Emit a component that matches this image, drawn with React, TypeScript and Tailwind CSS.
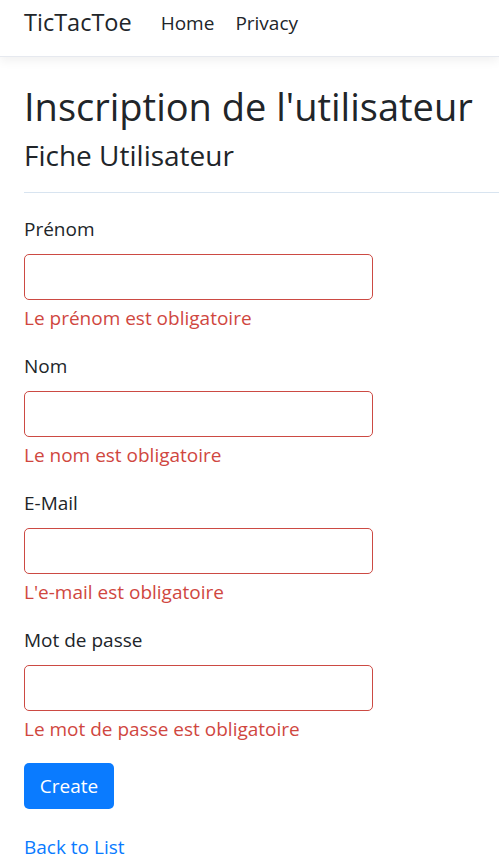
import React from "react";

const fields = [
  { label: "Prénom", type: "text", error: "Le prénom est obligatoire" },
  { label: "Nom", type: "text", error: "Le nom est obligatoire" },
  { label: "E-Mail", type: "email", error: "L'e-mail est obligatoire" },
  { label: "Mot de passe", type: "password", error: "Le mot de passe est obligatoire" },
];

const App: React.FC = () => {
  return (
    <div className="min-h-screen bg-white text-[#212529] font-['Open_Sans',sans-serif] text-[19px] leading-[1.5] overflow-hidden">
      {/* Navbar */}
      <nav className="h-[57px] flex items-center px-6 pb-[10px] border-b border-[#e6e9ef] shadow-[0_4px_10px_rgba(0,0,0,0.06)] mb-[27px]">
        <span className="text-[23.5px] text-[#212529] mr-[29px]">TicTacToe</span>
        <a href="#" className="mr-[21px] text-[#212529]">Home</a>
        <a href="#" className="text-[#212529]">Privacy</a>
      </nav>

      <main className="pl-6">
        <h1 className="text-[38px] leading-[1.2] mb-[9px]">Inscription de l'utilisateur</h1>
        <h4 className="text-[28px] leading-[1.2]">Fiche Utilisateur</h4>
        <hr className="mt-[20px] mb-[22px] border-t border-[#d8e4f0]" />

        <form className="w-[349px]">
          {fields.map((f) => (
            <div key={f.label} className="mb-[20px]">
              <label className="block mb-[10px]">{f.label}</label>
              <input
                type={f.type}
                className="block w-full h-[46px] rounded-[5px] border border-[#cc4a43] bg-white"
              />
              <span className="block text-[#d0473f] mt-[4px]">{f.error}</span>
            </div>
          ))}
          <button
            type="button"
            className="w-[90px] h-[46px] rounded-[5px] bg-[#0a7bff] text-white"
          >
            Create
          </button>
        </form>

        <div className="mt-[24px]">
          <a href="#" className="text-[#0a7bff]">Back to List</a>
        </div>
      </main>
    </div>
  );
};

export default App;
